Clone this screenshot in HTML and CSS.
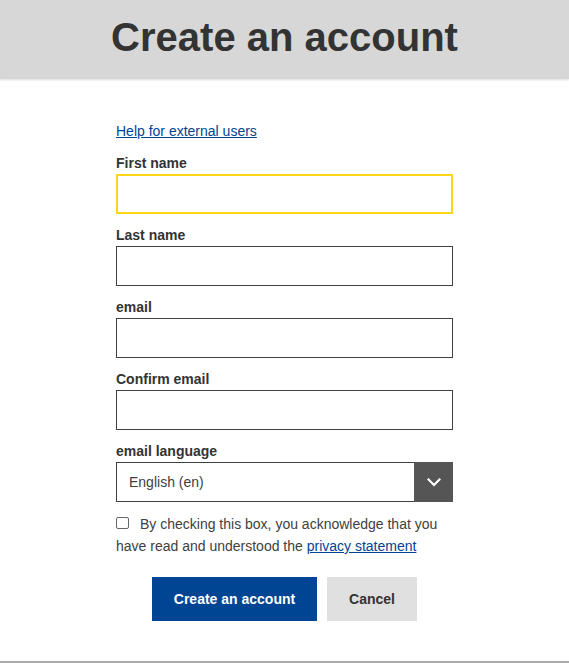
FILE: index.html
```html
<!DOCTYPE html>
<html lang="en">
<head>
<meta charset="utf-8">
<title>Create an account</title>
<link rel="stylesheet" href="styles.css">
</head>
<body>
<header class="page-header">
  <h1 class="page-title">Create an account</h1>
</header>
<main class="content">
  <form class="signup">
    <a class="help-link" href="#">Help for external users</a>
    <div class="field">
      <label class="field-label" for="fn">First name</label>
      <input class="text-input is-focused" id="fn" type="text">
    </div>
    <div class="field">
      <label class="field-label" for="ln">Last name</label>
      <input class="text-input" id="ln" type="text">
    </div>
    <div class="field">
      <label class="field-label" for="em">email</label>
      <input class="text-input" id="em" type="text">
    </div>
    <div class="field">
      <label class="field-label" for="cem">Confirm email</label>
      <input class="text-input" id="cem" type="text">
    </div>
    <div class="field field-last">
      <label class="field-label" for="lang">email language</label>
      <div class="select">
        <span class="select-value">English (en)</span>
        <span class="select-btn">
          <svg width="14" height="9" viewBox="0 0 14 9"><path d="M1.5 1.5 L7 7 L12.5 1.5" fill="none" stroke="#fff" stroke-width="2.2" stroke-linecap="square"/></svg>
        </span>
      </div>
    </div>
    <p class="consent">
      <span class="checkbox"></span>By checking this box, you acknowledge that you have read and understood the <a class="link" href="#">privacy statement</a>
    </p>
    <div class="actions">
      <button class="btn btn-primary" type="button">Create an account</button>
      <button class="btn btn-secondary" type="button">Cancel</button>
    </div>
  </form>
</main>
<footer class="page-footer"></footer>
</body>
</html>
```
FILE: styles.css
```css
* { box-sizing: border-box; }
html, body {
  margin: 0;
  padding: 0;
  background: #fff;
  font-family: "Liberation Sans", Arial, sans-serif;
  color: #333;
}
.page-header {
  height: 79px;
  background: #d7d7d7;
  box-shadow: 0 1px 2px rgba(0,0,0,0.15);
  display: flex;
  justify-content: center;
  align-items: center;
}
.page-title {
  margin: 0;
  font-size: 40px;
  font-weight: bold;
  color: #333;
  line-height: 1;
  padding-bottom: 6px;
}
.content {
  display: flex;
  justify-content: center;
  padding-top: 43px;
}
.signup {
  width: 337px;
  display: flex;
  flex-direction: column;
}
.help-link {
  font-size: 14px;
  line-height: 18px;
  color: #004494;
  text-decoration: underline;
  margin-bottom: 14px;
  align-self: flex-start;
}
.field {
  display: flex;
  flex-direction: column;
  margin-bottom: 12px;
}
.field-last {
  margin-bottom: 11px;
}
.field-label {
  font-size: 14px;
  font-weight: bold;
  line-height: 18px;
  margin-bottom: 2px;
  color: #333;
}
.text-input {
  height: 40px;
  border: 1px solid #404040;
  border-radius: 0;
  padding: 0 12px;
  font: inherit;
  outline: none;
}
.text-input.is-focused {
  border: 2px solid #ffd617;
}
.select {
  height: 40px;
  border: 1px solid #404040;
  display: flex;
  align-items: stretch;
}
.select-value {
  flex: 1;
  display: flex;
  align-items: center;
  padding-left: 12px;
  font-size: 14px;
  color: #404040;
}
.select-btn {
  width: 39px;
  margin: -1px -1px -1px 0;
  background: #555;
  display: flex;
  align-items: center;
  justify-content: center;
}
.consent {
  margin: 0;
  font-size: 14px;
  line-height: 22px;
  color: #404040;
}
.checkbox {
  display: inline-block;
  width: 13px;
  height: 12px;
  border: 1px solid #666;
  border-radius: 2px;
  vertical-align: 0;
  margin-right: 11px;
  background: #fff;
}
.link {
  color: #004494;
  text-decoration: underline;
}
.actions {
  display: flex;
  justify-content: center;
  gap: 10px;
  margin-top: 20px;
}
.btn {
  height: 44px;
  border: 0;
  border-radius: 0;
  font-family: inherit;
  font-size: 14px;
  font-weight: bold;
  cursor: pointer;
}
.btn-primary {
  width: 165px;
  background: #004494;
  color: #fff;
}
.btn-secondary {
  width: 90px;
  background: #e0e0e0;
  color: #333;
}
.page-footer {
  margin-top: 40px;
  border-top: 2px solid #aaa;
}
```
